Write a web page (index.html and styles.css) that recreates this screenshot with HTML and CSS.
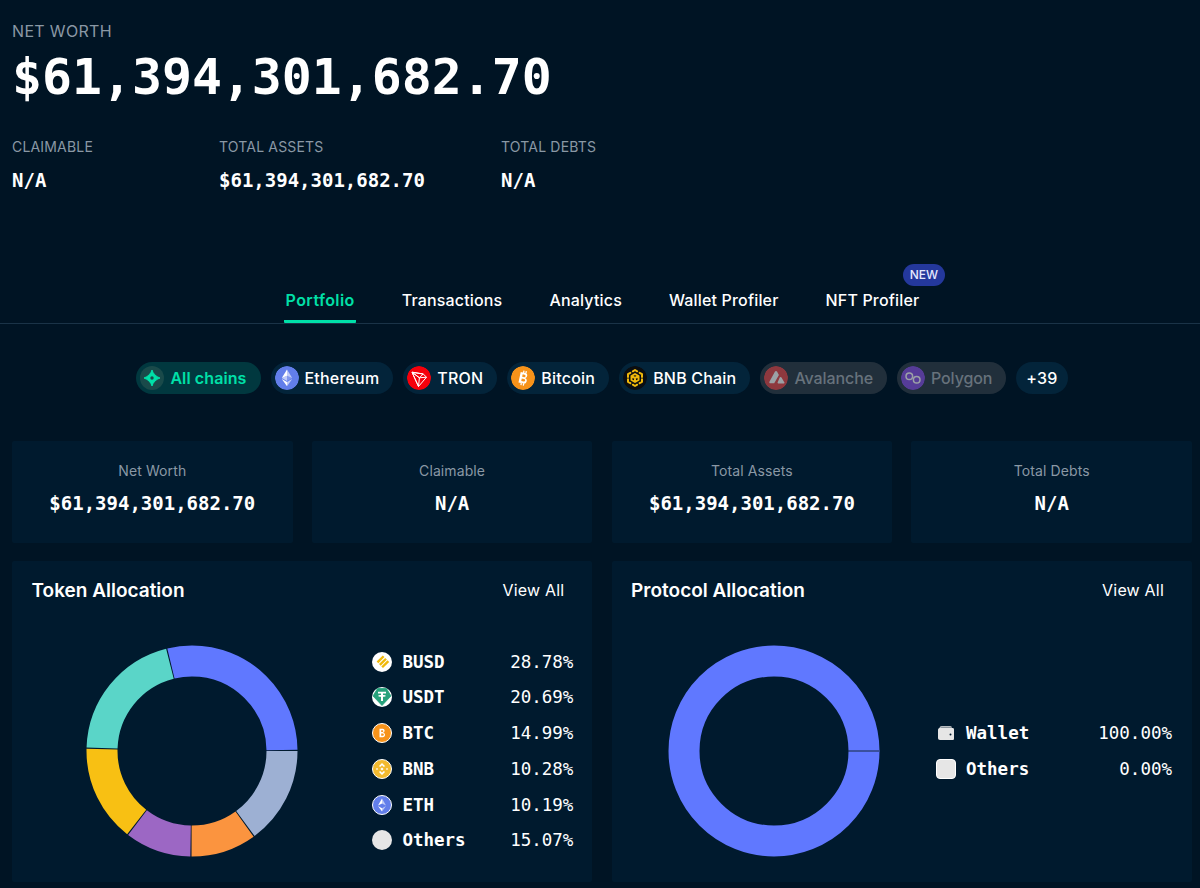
FILE: index.html
```html
<!DOCTYPE html>
<html lang="en">
<head>
<meta charset="utf-8">
<title>Portfolio</title>
<link rel="stylesheet" href="styles.css">
</head>
<body>
<header class="summary">
  <div class="label big-label">NET WORTH</div>
  <div class="net">$61,394,301,682.70</div>
  <div class="stats">
    <div class="stat stat-claim"><div class="label">CLAIMABLE</div><div class="val">N/A</div></div>
    <div class="stat stat-assets"><div class="label">TOTAL ASSETS</div><div class="val">$61,394,301,682.70</div></div>
    <div class="stat"><div class="label">TOTAL DEBTS</div><div class="val">N/A</div></div>
  </div>
</header>

<nav class="tabs">
  <a class="tab active">Portfolio</a>
  <a class="tab">Transactions</a>
  <a class="tab">Analytics</a>
  <a class="tab">Wallet Profiler</a>
  <a class="tab">NFT Profiler<span class="badge">NEW</span></a>
</nav>

<div class="chains">
  <div class="chip chip-active">
    <span class="ci ci-all"><svg viewBox="0 0 24 24" width="24" height="24"><path d="M12 4c1 3.600 3.800 6.600 8 8-4.200 1.400-7 4.400-8 8-1-3.600-3.800-6.600-8-8 4.200-1.400 7-4.400 8-8z" fill="#00e0a8" stroke="#00e0a8" stroke-width="1" stroke-linejoin="round"/><circle cx="12" cy="12" r="1.700" fill="#1a4a4a"/></svg></span>
    All chains
  </div>
  <div class="chip">
    <svg class="ci" viewBox="0 0 24 24" width="24" height="24"><circle cx="12" cy="12" r="12" fill="#627eea"/><path d="M12 3.500v6.300l5.200 2.300z" fill="#fff" opacity=".6"/><path d="M12 3.500 6.800 12.100 12 9.800z" fill="#fff"/><path d="M12 15.900v4.300l5.200-7.300z" fill="#fff" opacity=".6"/><path d="M12 20.200v-4.300l-5.200-3z" fill="#fff"/><path d="m12 14.900 5.200-2.800-5.200-2.300z" fill="#fff" opacity=".2"/><path d="m6.800 12.100 5.200 2.800V9.800z" fill="#fff" opacity=".6"/></svg>
    Ethereum
  </div>
  <div class="chip">
    <svg class="ci" viewBox="0 0 24 24" width="24" height="24"><circle cx="12" cy="12" r="12" fill="#f5000b"/><path d="M5 6.200 16.200 8l3.300 3.200-8 9.300zM5 6.200l6.500 14.300.9-8.700zM5 6.200l7.400 5.600 3.800-3.800zM12.400 11.800l7.100-.6" fill="none" stroke="#fff" stroke-width="1" stroke-linejoin="round"/></svg>
    TRON
  </div>
  <div class="chip">
    <svg class="ci" viewBox="0 0 24 24" width="24" height="24"><circle cx="12" cy="12" r="12" fill="#f7931a"/><g transform="rotate(12 12 12)"><path d="M8.500 6.500h4.800c3 0 3.200 4.600.5 5 3.500.2 3.300 5.800-.2 5.800H8.500zm2.400 2v2.500h2c1.600 0 1.600-2.500 0-2.500zm0 4.300v2.500h2.400c1.800 0 1.800-2.500 0-2.500zM10.800 4.600h1.300v2h-1.300zm2.400 0h1.300v2h-1.300zm-2.400 12.600h1.300v2.100h-1.300zm2.400 0h1.300v2.100h-1.300z" fill="#fff" fill-rule="evenodd"/></g></svg>
    Bitcoin
  </div>
  <div class="chip">
    <svg class="ci" viewBox="0 0 24 24" width="24" height="24"><circle cx="12" cy="12" r="12" fill="#0b0e11"/><g fill="none" stroke="#f0b90b" stroke-width="2" stroke-linejoin="round" stroke-linecap="round"><path d="M9.800 5.300 12 4l2.200 1.300M16.600 6.800 19 8.200v2.700M19 13.200v2.600l-2.400 1.400M14.200 18.700 12 20l-2.200-1.300M7.400 17.200 5 15.800v-2.600M5 10.900V8.200l2.400-1.400"/><path d="M12 8 15.500 10v4L12 16l-3.500-2v-4zM8.700 10.200 12 12l3.300-1.800M12 12v3.500"/></g></svg>
    BNB Chain
  </div>
  <div class="chip chip-off">
    <svg class="ci" viewBox="0 0 24 24" width="24" height="24"><circle cx="12" cy="12" r="12" fill="#e84142"/><path d="M11 5.500c.5-.8 1.500-.8 2 0l1.900 3.500-4.700 8.300H6.400c-.9 0-1.400-.9-1-1.600zM15.700 11.500c.4-.7 1.400-.7 1.800 0l2.900 5c.3.4 0 .9-.5.900h-5.700c-.5 0-.8-.5-.6-.9z" fill="#fff"/></svg>
    Avalanche
  </div>
  <div class="chip chip-off">
    <svg class="ci" viewBox="0 0 24 24" width="24" height="24"><circle cx="12" cy="12" r="12" fill="#8247e5"/><g fill="none" stroke="#fff" stroke-width="1.500"><circle cx="8.300" cy="10.200" r="3.300"/><circle cx="15.700" cy="13.800" r="3.300"/></g></svg>
    Polygon
  </div>
  <div class="chip chip-more">+39</div>
</div>

<section class="metrics">
  <div class="metric"><div class="m-label">Net Worth</div><div class="m-val">$61,394,301,682.70</div></div>
  <div class="metric"><div class="m-label">Claimable</div><div class="m-val">N/A</div></div>
  <div class="metric"><div class="m-label">Total Assets</div><div class="m-val">$61,394,301,682.70</div></div>
  <div class="metric"><div class="m-label">Total Debts</div><div class="m-val">N/A</div></div>
</section>

<section class="panels">
  <article class="panel">
    <div class="panel-head"><h2>Token Allocation</h2><a class="view">View All</a></div>
    <div class="panel-body body-token">
      <svg class="donut" viewBox="0 0 212 212" width="212" height="212">
        <g fill="none" stroke-width="31">
          <circle cx="106" cy="106" r="90" pathLength="100" stroke="#9db0d3" stroke-dasharray="14.89 85.11" stroke-dashoffset="0"/>
          <circle cx="106" cy="106" r="90" pathLength="100" stroke="#fb943f" stroke-dasharray="10.01 89.99" stroke-dashoffset="-15.07"/>
          <circle cx="106" cy="106" r="90" pathLength="100" stroke="#9c67c4" stroke-dasharray="10.10 89.90" stroke-dashoffset="-25.26"/>
          <circle cx="106" cy="106" r="90" pathLength="100" stroke="#f8c013" stroke-dasharray="14.81 85.19" stroke-dashoffset="-35.54"/>
          <circle cx="106" cy="106" r="90" pathLength="100" stroke="#5ad5c8" stroke-dasharray="20.51 79.49" stroke-dashoffset="-50.53"/>
          <circle cx="106" cy="106" r="90" pathLength="100" stroke="#6078ff" stroke-dasharray="28.60 71.40" stroke-dashoffset="-71.22"/>
        </g>
      </svg>
      <ul class="legend legend-token">
        <li><svg class="li" viewBox="0 0 20 20" width="20" height="20"><circle cx="10" cy="10" r="10" fill="#fff"/><path d="m10.800 3.500 1.700 1.600-6.200 6.200-1.700-1.700zM13.200 5.900l1.700 1.600-6.200 6.200L7 12zM15.500 8.300l1.700 1.600-6.200 6.200-1.700-1.600z" fill="#f0b90b"/></svg><span class="name">BUSD</span><span class="pct">28.78%</span></li>
        <li><svg class="li" viewBox="0 0 20 20" width="20" height="20"><circle cx="10" cy="10" r="10" fill="#fff"/><path d="M5.500 1.500h9L19 9 10 18.500 1 9z" fill="#26a17b" stroke="#26a17b" stroke-width=".8" stroke-linejoin="round"/><path d="M6 4.800h8v1.800h-3v1.500c1.600.1 2.800.4 2.800.8s-1.200.7-2.800.8V14H9V9.700c-1.600-.1-2.800-.4-2.800-.8s1.200-.7 2.800-.8V6.600H6z" fill="#fff"/></svg><span class="name">USDT</span><span class="pct">20.69%</span></li>
        <li><svg class="li" viewBox="0 0 20 20" width="20" height="20"><circle cx="10" cy="10" r="9.500" fill="#f7931a" stroke="#fff" stroke-width="1"/><path d="M7.500 5.800h3.200c2.400 0 2.600 3.500.4 3.900 2.700.2 2.500 4.500-.3 4.500H7.500zm1.700 1.500v1.800h1.200c1.200 0 1.200-1.800 0-1.800zm0 3.100v2.300h1.500c1.500 0 1.500-2.300 0-2.300z" fill="#fff" fill-rule="evenodd"/></svg><span class="name">BTC</span><span class="pct">14.99%</span></li>
        <li><svg class="li" viewBox="0 0 20 20" width="20" height="20"><circle cx="10" cy="10" r="9.500" fill="#f3ba2f" stroke="#fff" stroke-width="1"/><path d="m10 4 3 3-1.100 1.100L10 6.200 8.100 8.100 7 7zM5 8.900 6.100 10 5 11.100 3.900 10zm10 0 1.100 1.100-1.100 1.100-1.100-1.100zM10 8.400l1.600 1.600-1.600 1.600L8.400 10zM7 13l1.100-1.100 1.900 1.900 1.900-1.900L13 13l-3 3z" fill="#fff"/></svg><span class="name">BNB</span><span class="pct">10.28%</span></li>
        <li><svg class="li" viewBox="0 0 20 20" width="20" height="20"><circle cx="10" cy="10" r="9.500" fill="#627eea" stroke="#fff" stroke-width="1"/><path d="M10 3.500v5l4 2.100z" fill="#fff" opacity=".6"/><path d="M10 3.500 6 10.600l4-2.100z" fill="#fff"/><path d="M10 13.200v3.300l4-5.500z" fill="#fff" opacity=".6"/><path d="M10 16.500v-3.300L6 11z" fill="#fff"/></svg><span class="name">ETH</span><span class="pct">10.19%</span></li>
        <li><span class="others-dot"></span><span class="name">Others</span><span class="pct">15.07%</span></li>
      </ul>
    </div>
  </article>
  <article class="panel">
    <div class="panel-head"><h2>Protocol Allocation</h2><a class="view">View All</a></div>
    <div class="panel-body body-proto">
      <svg class="donut" viewBox="0 0 212 212" width="212" height="212">
        <circle cx="106" cy="106" r="90" fill="none" stroke="#6078ff" stroke-width="31"/>
        <path d="M180 106h31" stroke="#14283c" stroke-width="1"/>
      </svg>
      <ul class="legend legend-proto">
        <li><svg class="li" viewBox="0 0 20 20" width="20" height="20"><path d="M3.500 5.200c0-1.400 1-2.200 2.300-2.200h8.400c1 0 1.800.7 1.800 1.800H5.500z" fill="#e6e6e6" opacity=".8"/><path d="M2 6.800C2 5.500 3 5 4 5h12.500c1 0 1.500.7 1.500 1.500v9c0 1-.6 1.500-1.500 1.500H4c-1.200 0-2-.8-2-2z" fill="#e6e6e6"/><circle cx="14.500" cy="11.500" r="1" fill="#001a2e"/></svg><span class="name">Wallet</span><span class="pct">100.00%</span></li>
        <li><span class="others-sq"></span><span class="name">Others</span><span class="pct">0.00%</span></li>
      </ul>
    </div>
  </article>
</section>
</body>
</html>
```
FILE: styles.css
```css
* { box-sizing: border-box; }
html, body { margin: 0; padding: 0; }
body {
  height: 888px;
  overflow: hidden;
  background: #001424;
  color: #fff;
  font-family: Inter, "Liberation Sans", sans-serif;
}
.summary { padding: 21px 12px 0; height: 267px; }
.label { font-size: 14px; line-height: 20px; color: #8a98a5; letter-spacing: .18px; }
.big-label { font-size: 16px; letter-spacing: .33px; }
.net {
  font-family: "DejaVu Sans Mono", monospace;
  font-weight: 700;
  font-size: 49.800px;
  line-height: 60px;
  margin-top: 6px;
}
.stats { display: flex; margin-top: 30px; }
.stat-claim { width: 207px; }
.stat-assets { width: 282px; }
.val {
  font-family: "DejaVu Sans Mono", monospace;
  font-weight: 700;
  font-size: 19px;
  line-height: 24px;
  margin-top: 11px;
}
.tabs {
  display: flex;
  justify-content: center;
  gap: 44px;
  height: 57px;
  padding-top: 20px;
  padding-left: 5px;
  border-bottom: 1px solid #1a3347;
}
.tab {
  position: relative;
  font-size: 16px;
  font-weight: 450;
  line-height: 26px;
  height: 36px;
  padding: 0 1.500px;
  letter-spacing: .17px;
}
.tab.active { color: #00e0a8; font-weight: 600; letter-spacing: .4px; border-bottom: 3px solid #00e0a8; border-radius: 0 0 1px 1px; }
.badge {
  position: absolute;
  right: -24px;
  top: -23px;
  width: 42px;
  height: 22px;
  border-radius: 11px;
  background: #24389c;
  font-size: 12px;
  font-weight: 500;
  line-height: 22px;
  letter-spacing: 0;
  text-align: center;
  color: #e6eaff;
}
.chains {
  display: flex;
  justify-content: center;
  gap: 10px;
  margin-top: 38px;
  padding-left: 4px;
}
.chip {
  display: flex;
  align-items: center;
  gap: 6px;
  height: 32px;
  padding: 0 14px 0 4px;
  border-radius: 16px;
  background: #03243a;
  font-size: 16px;
  font-weight: 450;
  letter-spacing: .2px;
}
.ci { flex: none; border-radius: 50%; display: block; }
.chip-active { background: #01383f; color: #00e0a8; font-weight: 600; letter-spacing: .1px; }
.ci-all { background: #1a4a4a; width: 24px; height: 24px; }
.chip-off { background: #212f3b; color: #67727c; letter-spacing: -.1px; }
.chip-off .ci { opacity: .55; }
.chip-more { padding: 0 10px; }
.metrics {
  display: grid;
  grid-template-columns: repeat(4, 1fr);
  gap: 19.200px;
  margin: 47px 8px 0 12px;
}
.metric {
  height: 102px;
  background: #001a2e;
  border-radius: 2px;
  text-align: center;
  padding-top: 20px;
}
.m-label { font-size: 14px; line-height: 20px; color: #8a98a5; letter-spacing: .1px; }
.m-val {
  font-family: "DejaVu Sans Mono", monospace;
  font-weight: 700;
  font-size: 19px;
  line-height: 24px;
  margin-top: 10px;
}
.panels {
  display: grid;
  grid-template-columns: 1fr 1fr;
  gap: 19.200px;
  margin: 18px 8px 0 12px;
}
.panel { height: 321px; background: #001a2e; border-radius: 2px; padding: 18px 20px 0 19.500px; }
.panel-head { display: flex; justify-content: space-between; align-items: center; height: 24px; }
.panel-head h2 { margin: 0; font-size: 19px; font-weight: 600; line-height: 24px; }
.view { font-size: 16px; padding-right: 8px; font-weight: 400; letter-spacing: .2px; margin-top: -2px; }
.panel-body { display: flex; justify-content: space-between; align-items: center; margin-top: 42px; height: 212px; }
.body-token { padding-left: 54px; }
.body-proto { padding-left: 36.500px; }
.donut { flex: none; display: block; }
.legend { list-style: none; margin: 0; padding: 0; font-family: "DejaVu Sans Mono", monospace; font-size: 17.500px; }
.legend li { display: flex; align-items: center; height: 35.700px; }
.legend-token { width: 201px; margin-right: -1px; }
.legend-proto { width: 236px; }
.li { flex: none; display: block; }
.others-dot { flex: none; width: 20px; height: 20px; border-radius: 50%; background: #e6e6e6; }
.others-sq { flex: none; width: 20px; height: 20px; border-radius: 4px; background: #e6e6e6; border: 1px solid #fff; }
.name { margin-left: 10px; font-weight: 700; }
.pct { margin-left: auto; }
```
